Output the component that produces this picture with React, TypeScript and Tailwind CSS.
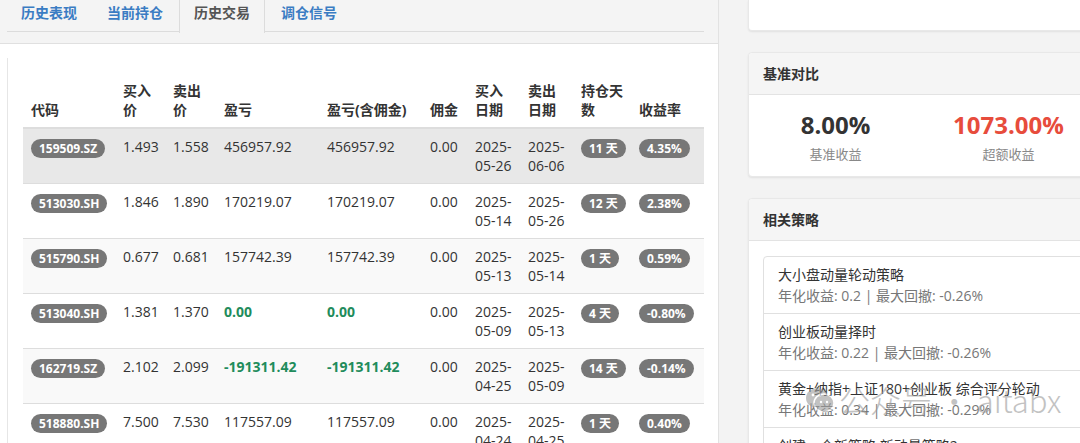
import React from "react";

const F = { fontFamily: '"Open Sans", "Noto Sans CJK SC", sans-serif' };

type Row = {
  code: string;
  buy: string;
  sell: string;
  pnl: string;
  pnl2: string;
  fee: string;
  bd: [string, string];
  sd: [string, string];
  days: string;
  rate: string;
  green?: boolean;
  bg: string;
};

const rows: Row[] = [
  { code: "159509.SZ", buy: "1.493", sell: "1.558", pnl: "456957.92", pnl2: "456957.92", fee: "0.00", bd: ["2025-", "05-26"], sd: ["2025-", "06-06"], days: "11 天", rate: "4.35%", bg: "bg-[#e8e8e8]" },
  { code: "513030.SH", buy: "1.846", sell: "1.890", pnl: "170219.07", pnl2: "170219.07", fee: "0.00", bd: ["2025-", "05-14"], sd: ["2025-", "05-26"], days: "12 天", rate: "2.38%", bg: "bg-white" },
  { code: "515790.SH", buy: "0.677", sell: "0.681", pnl: "157742.39", pnl2: "157742.39", fee: "0.00", bd: ["2025-", "05-13"], sd: ["2025-", "05-14"], days: "1 天", rate: "0.59%", bg: "bg-[#f9f9f9]" },
  { code: "513040.SH", buy: "1.381", sell: "1.370", pnl: "0.00", pnl2: "0.00", fee: "0.00", bd: ["2025-", "05-09"], sd: ["2025-", "05-13"], days: "4 天", rate: "-0.80%", green: true, bg: "bg-white" },
  { code: "162719.SZ", buy: "2.102", sell: "2.099", pnl: "-191311.42", pnl2: "-191311.42", fee: "0.00", bd: ["2025-", "04-25"], sd: ["2025-", "05-09"], days: "14 天", rate: "-0.14%", green: true, bg: "bg-[#f9f9f9]" },
  { code: "518880.SH", buy: "7.500", sell: "7.530", pnl: "117557.09", pnl2: "117557.09", fee: "0.00", bd: ["2025-", "04-24"], sd: ["2025-", "04-25"], days: "1 天", rate: "0.40%", bg: "bg-white" },
];

const cols = ["w-[92px]", "w-[50px]", "w-[51px]", "w-[103px]", "w-[103px]", "w-[45px]", "w-[53px]", "w-[53px]", "w-[58px]", "w-[73px]"];

function Badge({ children }: { children: React.ReactNode }) {
  return (
    <span className="inline-block bg-[#777] text-white text-[12px] font-bold leading-[13px] px-[8px] py-[3px] rounded-[10px] whitespace-nowrap align-middle">
      {children}
    </span>
  );
}

const headers: React.ReactNode[] = [
  "代码",
  <>买入<br />价</>,
  <>卖出<br />价</>,
  "盈亏",
  "盈亏(含佣金)",
  "佣金",
  <>买入<br />日期</>,
  <>卖出<br />日期</>,
  <>持仓天<br />数</>,
  "收益率",
];

export default function App() {
  return (
    <div style={F} className="relative w-[1080px] h-[443px] overflow-hidden flex bg-[#f3f3f3] text-[#333] text-[14px]">
      {/* Left panel */}
      <div className="w-[719px] shrink-0 border-r border-[#e2e2e2] flex flex-col">
        <div className="h-[44px] shrink-0 bg-[#f4f4f4] px-[7px] border-b border-[#e0e0e0]">
          <div className="flex h-[32px] border-b border-[#dcdcdc] w-[697px]">
            {["历史表现", "当前持仓", "历史交易", "调仓信号"].map((t, i) => (
              <div
                key={t}
                className={
                  "px-[14px] mr-[2px] flex items-center pb-[8px] font-bold whitespace-nowrap " +
                  (i === 2
                    ? "text-[#555] bg-[#f4f4f4] border-x border-[#dcdcdc] -mb-px h-[33px]"
                    : "text-[#3a7cc3] h-[32px]")
                }
              >
                {t}
              </div>
            ))}
          </div>
        </div>
        <div className="flex-1 bg-white pl-[7px] pt-[14px]">
          <div className="w-[697px] border-l border-[#e6e6e6] pl-[15px] h-full">
            <table className="table-fixed border-collapse w-[681px]">
              <thead>
                <tr className="h-[70px] border-b-2 border-[#dddddd]">
                  {headers.map((h, i) => (
                    <th key={i} className={cols[i] + " text-left align-bottom font-bold px-[8px] pb-[8px] leading-[19px] whitespace-nowrap"}>
                      {h}
                    </th>
                  ))}
                </tr>
              </thead>
              <tbody>
                {rows.map((r) => (
                  <tr key={r.code} className={r.bg + " border-t border-[#dddddd]"}>
                    <td className="px-[8px] py-[8px] align-top leading-[19px]"><Badge>{r.code}</Badge></td>
                    <td className="px-[8px] py-[8px] align-top leading-[19px]">{r.buy}</td>
                    <td className="px-[8px] py-[8px] align-top leading-[19px]">{r.sell}</td>
                    <td className={"px-[8px] py-[8px] align-top leading-[19px] whitespace-nowrap " + (r.green ? "text-[#1f8c5c] font-bold" : "")}>{r.pnl}</td>
                    <td className={"px-[8px] py-[8px] align-top leading-[19px] whitespace-nowrap " + (r.green ? "text-[#1f8c5c] font-bold" : "")}>{r.pnl2}</td>
                    <td className="px-[8px] py-[8px] align-top leading-[19px]">{r.fee}</td>
                    <td className="px-[8px] py-[8px] align-top leading-[19px] whitespace-nowrap">{r.bd[0]}<br />{r.bd[1]}</td>
                    <td className="px-[8px] py-[8px] align-top leading-[19px] whitespace-nowrap">{r.sd[0]}<br />{r.sd[1]}</td>
                    <td className="px-[8px] py-[8px] align-top leading-[19px]"><Badge>{r.days}</Badge></td>
                    <td className="px-[8px] py-[8px] align-top leading-[19px]"><Badge>{r.rate}</Badge></td>
                  </tr>
                ))}
              </tbody>
            </table>
          </div>
        </div>
      </div>

      {/* Right column */}
      <div className="w-[380px] shrink-0 pl-[29px] flex flex-col">
        <div className="shrink-0 h-[31px] w-[360px] bg-white rounded-b-[4px] shadow-[0_1px_2px_rgba(0,0,0,0.08)] border-x border-b border-[#e8e8e8]" />

        <div className="shrink-0 mt-[21px] w-[360px] bg-white rounded-[4px] shadow-[0_1px_2px_rgba(0,0,0,0.08)] border border-[#e8e8e8]">
          <div className="h-[42px] bg-[#f5f5f5] border-b border-[#e3e3e3] px-[14px] flex items-center font-bold text-[14px] text-[#333] rounded-t-[4px]">
            基准对比
          </div>
          <div className="flex pt-[15px] pb-[12px]">
            <div className="w-[173px] flex flex-col items-center">
              <div className="text-[24px] font-bold leading-[30px] text-[#333]">8.00%</div>
              <div className="text-[13px] leading-[20px] mt-[4px] text-[#888]">基准收益</div>
            </div>
            <div className="w-[173px] flex flex-col items-center">
              <div className="text-[24px] font-bold leading-[30px] text-[#e74c3c]">1073.00%</div>
              <div className="text-[13px] leading-[20px] mt-[4px] text-[#888]">超额收益</div>
            </div>
          </div>
        </div>

        <div className="shrink-0 mt-[21px] w-[360px] bg-white rounded-[4px] shadow-[0_1px_2px_rgba(0,0,0,0.08)] border border-[#e8e8e8]">
          <div className="h-[42px] bg-[#f5f5f5] border-b border-[#e3e3e3] px-[14px] flex items-center font-bold text-[14px] text-[#333] rounded-t-[4px]">
            相关策略
          </div>
          <div className="pt-[15px] pl-[14px]">
            <div className="border border-[#e0e0e0] rounded-[4px]">
              {[
                ["大小盘动量轮动策略", "年化收益: 0.2 | 最大回撤: -0.26%"],
                ["创业板动量择时", "年化收益: 0.22 | 最大回撤: -0.26%"],
                ["黄金+纳指+上证180+创业板 综合评分轮动", "年化收益: 0.34 | 最大回撤: -0.29%"],
                ["创建一个新策略 新动量策略2", "年化收益: 0.2 | 最大回撤: -0.26%"],
              ].map(([t, s], i) => (
                <div key={i} className={"px-[14px] py-[7px] " + (i > 0 ? "border-t border-[#e0e0e0]" : "")}>
                  <div className="leading-[21px] text-[#333] whitespace-nowrap">{t}</div>
                  <div className="leading-[21px] text-[#777] whitespace-nowrap">{s}</div>
                </div>
              ))}
            </div>
          </div>
        </div>
      </div>

      {/* Watermark overlay */}
      <div className="absolute left-[805px] top-[383px] flex items-center gap-[4px] pointer-events-none opacity-60">
        <svg width="30" height="28" viewBox="0 0 30 28">
          <ellipse cx="12" cy="12" rx="11" ry="10" fill="#9a9a9a" />
          <ellipse cx="19" cy="17" rx="10" ry="9" fill="#9a9a9a" stroke="#fff" strokeWidth="1.5" />
          <circle cx="8" cy="9" r="1.4" fill="#fff" />
          <circle cx="15" cy="9" r="1.4" fill="#fff" />
          <circle cx="16" cy="16" r="1.2" fill="#fff" />
          <circle cx="22" cy="16" r="1.2" fill="#fff" />
        </svg>
        <span className="text-[31px] leading-[34px] text-[#9a9a9a] whitespace-nowrap" style={{ fontFamily: '"Noto Sans CJK SC", "Open Sans", sans-serif', fontWeight: 300 }}>
          公众号 · aitabx
        </span>
      </div>
    </div>
  );
}
